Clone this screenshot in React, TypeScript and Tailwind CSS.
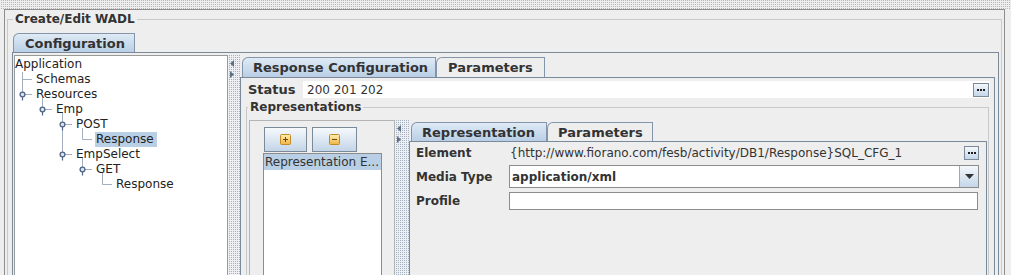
import React from "react";

type Seg = [number, number, number, number];

interface TreeRow {
  label: string;
  level: number;
  lines: Seg[];
  handle?: number;
  selected?: boolean;
}

const rows: TreeRow[] = [
  { label: "Application", level: 0, lines: [[7.5, 11, 7.5, 15]] },
  { label: "Schemas", level: 1, lines: [[7.5, 0, 7.5, 15], [7.5, 7.5, 17, 7.5]] },
  { label: "Resources", level: 1, lines: [[7.5, 0, 7.5, 7.5], [7.5, 7.5, 17, 7.5], [27.5, 11, 27.5, 15]], handle: 7.5 },
  { label: "Emp", level: 2, lines: [[27.5, 0, 27.5, 7.5], [27.5, 7.5, 37, 7.5], [47.5, 11, 47.5, 15]], handle: 27.5 },
  { label: "POST", level: 3, lines: [[47.5, 0, 47.5, 15], [47.5, 7.5, 57, 7.5], [67.5, 11, 67.5, 15]], handle: 47.5 },
  { label: "Response", level: 4, lines: [[47.5, 0, 47.5, 15], [67.5, 0, 67.5, 7.5], [67.5, 7.5, 77, 7.5]], selected: true },
  { label: "EmpSelect", level: 3, lines: [[47.5, 0, 47.5, 7.5], [47.5, 7.5, 57, 7.5], [67.5, 11, 67.5, 15]], handle: 47.5 },
  { label: "GET", level: 4, lines: [[67.5, 0, 67.5, 7.5], [67.5, 7.5, 77, 7.5], [87.5, 11, 87.5, 15]], handle: 67.5 },
  { label: "Response", level: 5, lines: [[87.5, 0, 87.5, 7.5], [87.5, 7.5, 97, 7.5]] },
];

function Tab({ label, selected, className }: { label: string; selected?: boolean; className: string }) {
  return (
    <div
      className={`${className} h-full flex items-center border border-b-0 border-[#8395ab] rounded-tl-[6px] font-bold text-[13px] text-[#333] ${
        selected ? "bg-linear-to-b from-[#dfeaf5] to-[#b9cfe6]" : "bg-[#eeeeee]"
      }`}
    >
      {label}
    </div>
  );
}

function DotsButton({ className }: { className: string }) {
  return (
    <div className={`${className} flex items-center justify-center gap-[1px] border border-[#7a8a99] bg-linear-to-b from-[#f5f8fb] to-[#c4d6e9]`}>
      <span className="w-[2px] h-[2px] bg-[#1e1e1e]" />
      <span className="w-[2px] h-[2px] bg-[#1e1e1e]" />
      <span className="w-[2px] h-[2px] bg-[#1e1e1e]" />
    </div>
  );
}

function Divider({ className }: { className: string }) {
  return (
    <div className={`${className} h-[300px] flex flex-col items-start pl-[2px] bg-[#eef0f3] bg-[image:conic-gradient(#a3b0bf_0_25%,transparent_0)] bg-[length:2px_2px]`}>
      <svg width="5" height="7" className="mt-[5px]">
        <path d="M4 0 L0 3.5 L4 7 Z" fill="#5d6f87" />
      </svg>
      <svg width="5" height="7" className="mt-[4px]">
        <path d="M0 0 L4 3.5 L0 7 Z" fill="#5d6f87" />
      </svg>
    </div>
  );
}

function SignIcon({ minus }: { minus?: boolean }) {
  return (
    <svg width="11" height="11" viewBox="0 0 11 11">
      <defs>
        <linearGradient id={minus ? "gm" : "gp"} x1="0" y1="0" x2="0" y2="1">
          <stop offset="0" stopColor="#fff0b0" />
          <stop offset="1" stopColor="#f1b343" />
        </linearGradient>
      </defs>
      <rect x="0.5" y="0.5" width="10" height="10" rx="1" fill={`url(#${minus ? "gm" : "gp"})`} stroke="#c48a26" />
      <line x1="3" y1="5.5" x2="8" y2="5.5" stroke="#6b4a12" />
      {!minus && <line x1="5.5" y1="3" x2="5.5" y2="8" stroke="#6b4a12" />}
    </svg>
  );
}

function Tree() {
  return (
    <div className="w-[214px] h-[300px] border border-[#9a9a9a] bg-white pt-[1px]">
      {rows.map((r, i) => (
        <div key={i} className="h-[15px] flex items-center">
          <svg width={20 * r.level} height="15" className="shrink-0 overflow-visible">
            {r.lines.map((l, j) => (
              <line key={j} x1={l[0]} y1={l[1]} x2={l[2]} y2={l[3]} stroke="#a3afbf" />
            ))}
            {r.handle !== undefined && (
              <g>
                <line x1={r.handle} y1="10" x2={r.handle} y2="13.5" stroke="#4f6586" strokeWidth="1.2" />
                <circle cx={r.handle} cy="7.5" r="2.4" fill="#dbe4ee" stroke="#4f6586" strokeWidth="1.3" />
              </g>
            )}
          </svg>
          <span className={`leading-[15px] ${r.selected ? "bg-[#b8cfe5] pl-[1px] pr-[3px]" : "pl-[1px]"} ${r.level === 0 ? "ml-[-1px]" : ""}`}>
            {r.label}
          </span>
        </div>
      ))}
    </div>
  );
}

function RepresentationTabs() {
  return (
    <div className="w-[578px] pt-[2px]">
      <div className="h-[19px] flex pl-[2px]">
        <Tab label="Representation" selected className="w-[136px] pl-[10px]" />
        <Tab label="Parameters" className="w-[106px] pl-[10px]" />
      </div>
      <div className="h-[300px] border-t border-x border-[#7a8a99] pl-[6px] pr-[7px]">
        <div className="mt-[4px] h-[14px] flex items-center">
          <span className="w-[94px] font-bold text-[#333]">Element</span>
          <span className="flex-1 text-[#333] whitespace-nowrap">
            {"{http://www.fiorano.com/fesb/activity/DB1/Response}SQL_CFG_1"}
          </span>
          <DotsButton className="w-[15px] h-[14px]" />
        </div>
        <div className="mt-[5px] h-[23px] flex items-center">
          <span className="w-[93px] font-bold text-[#333]">Media Type</span>
          <div className="flex-1 h-full flex border border-[#8c8c8c] bg-white">
            <span className="flex-1 flex items-center pl-[2px] font-bold text-[#333]">application/xml</span>
            <div className="w-[19px] h-full flex items-center justify-center border-l border-[#9aa8b8] bg-linear-to-b from-[#f3f7fb] to-[#c5d6e8]">
              <svg width="9" height="5">
                <path d="M0 0 L9 0 L4.5 5 Z" fill="#333" />
              </svg>
            </div>
          </div>
        </div>
        <div className="mt-[4px] h-[18px] flex items-center pr-[1px]">
          <span className="w-[93px] font-bold text-[#333]">Profile</span>
          <div className="flex-1 h-full border border-[#8c8c8c] bg-white" />
        </div>
      </div>
    </div>
  );
}

function ResponsePane() {
  return (
    <div className="w-[755px] pt-[2px]">
      <div className="h-[20px] flex pl-[2px]">
        <Tab label="Response Configuration" selected className="w-[194px] pl-[10px]" />
        <Tab label="Parameters" className="w-[109px] pl-[11px]" />
      </div>
      <div className="h-[300px] border-t border-x border-[#7a8a99] pl-[5px]">
        <div className="mt-[3px] h-[17px] flex items-center pl-[2px] pr-[4px]">
          <span className="w-[55px] font-bold text-[13px] text-[#333]">Status</span>
          <div className="flex-1 h-full flex items-center bg-white">
            <span className="flex-1 pl-[4px] text-[#333]">200 201 202</span>
            <DotsButton className="w-[16px] h-[14px] mr-[1px]" />
          </div>
        </div>
        <fieldset className="mt-[2px] w-[743px] h-[300px] border-t border-x border-[#c9c9c9]">
          <legend className="ml-[1px] px-[2px] font-bold leading-[14px] text-[#333]">Representations</legend>
          <div className="mt-[6px] ml-[2px] flex">
            <div className="w-[146px] h-[300px] border border-[#b4b4b4] pt-[6px] pl-[14px]">
              <div className="flex gap-[5px]">
                <div className="w-[43px] h-[25px] flex items-center justify-center border border-[#7a8a99] bg-linear-to-b from-[#f6f9fc] to-[#c3d5e8]">
                  <SignIcon />
                </div>
                <div className="w-[45px] h-[25px] flex items-center justify-center border border-[#7a8a99] bg-linear-to-b from-[#f6f9fc] to-[#c3d5e8]">
                  <SignIcon minus />
                </div>
              </div>
              <div className="mt-[1px] ml-[-1px] w-[119px] h-[200px] border border-[#8c8c8c] bg-white">
                <div className="h-[16px] flex items-center pl-[1px] bg-[#b8cfe5] text-[#333] whitespace-nowrap">
                  Representation E...
                </div>
              </div>
            </div>
            <Divider className="w-[14px]" />
            <RepresentationTabs />
          </div>
        </fieldset>
      </div>
    </div>
  );
}

export default function App() {
  return (
    <div className="w-[1011px] h-[275px] overflow-hidden bg-[#eeeeee] font-['DejaVu_Sans',sans-serif] text-[12px] text-[#222] leading-none">
      <div className="h-[9px] bg-[image:conic-gradient(#b8b8b8_0_25%,transparent_0)] bg-[length:2px_2px]" />
      <div className="ml-[4px] w-[1001px] h-[300px] border-t border-x border-[#8e8e8e] px-[2px] pt-[2px]">
        <fieldset className="h-[300px] border-t border-x border-[#c9c9c9]">
          <legend className="ml-[5px] px-[2px] font-bold leading-[14px] text-[#333]">Create/Edit WADL</legend>
          <div className="ml-[4px] mt-[7px] w-[987px]">
            <div className="h-[19px] flex pl-[1px]">
              <Tab label="Configuration" selected className="w-[122px] pl-[11px]" />
            </div>
            <div className="h-[300px] border-t border-x border-[#7a8a99] pl-[1px] pt-[2px] flex">
              <Tree />
              <Divider className="w-[12px]" />
              <ResponsePane />
            </div>
          </div>
        </fieldset>
      </div>
    </div>
  );
}
